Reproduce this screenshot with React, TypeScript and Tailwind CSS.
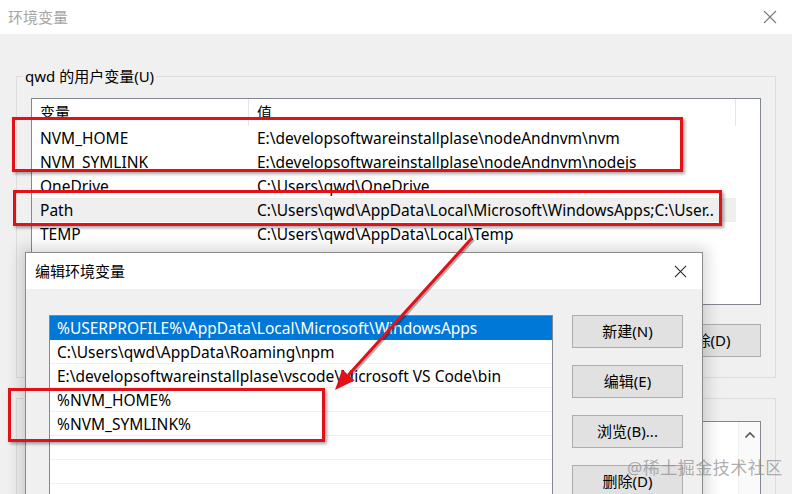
import React from "react";

const userVars = [
  ["NVM_HOME", "E:\\developsoftwareinstallplase\\nodeAndnvm\\nvm"],
  ["NVM_SYMLINK", "E:\\developsoftwareinstallplase\\nodeAndnvm\\nodejs"],
  ["OneDrive", "C:\\Users\\qwd\\OneDrive"],
  ["Path", "C:\\Users\\qwd\\AppData\\Local\\Microsoft\\WindowsApps;C:\\User.."],
  ["TEMP", "C:\\Users\\qwd\\AppData\\Local\\Temp"],
];

const pathItems = [
  "%USERPROFILE%\\AppData\\Local\\Microsoft\\WindowsApps",
  "C:\\Users\\qwd\\AppData\\Roaming\\npm",
  "E:\\developsoftwareinstallplase\\vscode\\Microsoft VS Code\\bin",
  "%NVM_HOME%",
  "%NVM_SYMLINK%",
  "",
  "",
  "",
];

function CloseIcon({ size, color }: { size: number; color: string }) {
  return (
    <svg width={size} height={size} viewBox="0 0 14 14">
      <path d="M1 1L13 13M13 1L1 13" stroke={color} strokeWidth="1.1" fill="none" />
    </svg>
  );
}

function WinButton({ label, className = "" }: { label: string; className?: string }) {
  return (
    <div
      className={`w-[111px] h-[33px] shrink-0 flex items-center justify-center bg-[#e1e1e1] border border-[#adadad] text-[15px] text-black ${className}`}
    >
      {label}
    </div>
  );
}

export default function App() {
  return (
    <div className="relative w-[792px] h-[494px] overflow-hidden bg-[#f0f0f0] font-['Noto_Sans','Noto_Sans_CJK_SC',sans-serif] text-black">
      {/* background window: 环境变量 */}
      <div className="h-[34px] bg-white flex items-center justify-between pl-[8px] pr-[15px]">
        <span className="text-[15px] text-[#a6a6a6]">环境变量</span>
        <CloseIcon size={14} color="#7a7a7a" />
      </div>

      <div className="px-[16px] pt-[32px]">
        <fieldset className="border border-[#dcdcdc] p-0 m-0">
          <legend className="ml-[6px] px-[2px] text-[15px] leading-[20px]">qwd 的用户变量(U)</legend>
          <div className="px-[14px] pt-[12px] pb-[20px]">
            <div className="h-[207px] border border-[#828790] bg-white">
              <div className="h-[27px] flex text-[15px]">
                <div className="w-[217px] pl-[8px] flex items-center border-r border-[#e5e5e5]">变量</div>
                <div className="w-[487px] pl-[8px] flex items-center border-r border-[#e5e5e5]">值</div>
              </div>
              {userVars.map(([name, value]) => (
                <div
                  key={name}
                  className={`h-[24px] w-[704px] flex items-center pt-[2px] text-[15.5px] ${name === "Path" ? "bg-[#efefef]" : ""}`}
                >
                  <div className="w-[217px] pl-[8px] whitespace-nowrap overflow-hidden">{name}</div>
                  <div className="w-[487px] pl-[8px] whitespace-nowrap overflow-hidden">{value}</div>
                </div>
              ))}
            </div>
            <div className="mt-[19px] flex justify-end gap-[10px]">
              <WinButton label="新建(N)..." />
              <WinButton label="编辑(E)..." />
              <WinButton label="删除(D)" />
            </div>
          </div>
        </fieldset>

        <fieldset className="mt-[10px] border border-[#dcdcdc] p-0 m-0">
          <legend className="ml-[6px] px-[2px] text-[15px] leading-[20px]">系统变量(S)</legend>
          <div className="px-[14px] pt-[13px]">
            <div className="h-[120px] border border-[#828790] bg-white flex justify-end">
              <div className="w-[22px] border-l border-[#f0f0f0] bg-[#fafafa] flex flex-col items-center justify-between">
                <svg width="12" height="8" viewBox="0 0 12 8" className="mt-[9px]">
                  <path d="M1.5 6.5L6 2L10.5 6.5" stroke="#555" strokeWidth="1.6" fill="none" />
                </svg>
                <div className="w-[19px] h-[40px] bg-[#cdcdcd]" />
              </div>
            </div>
          </div>
        </fieldset>
      </div>

      {/* foreground window: 编辑环境变量 */}
      <div className="absolute left-[25px] top-[252px] w-[678px] h-[260px] border border-[#8a8a8a] bg-[#f0f0f0] shadow-[0_0_14px_4px_rgba(0,0,0,0.16)]">
        <div className="h-[36px] bg-white flex items-center justify-between pl-[9px] pr-[15px]">
          <span className="text-[15px]">编辑环境变量</span>
          <CloseIcon size={13} color="#222" />
        </div>
        <div className="flex gap-[19px] pl-[23px] pt-[26px]">
          <div className="w-[504px] h-[240px] border border-[#828790] bg-white">
            {pathItems.map((item, i) => (
              <div
                key={i}
                className={`h-[24px] flex items-center pl-[7px] pt-[2px] text-[15.5px] whitespace-nowrap border-b ${
                  i === 0 ? "bg-[#0078d7] text-white border-[#0078d7]" : "border-[#f0f0f0]"
                }`}
              >
                {item}
              </div>
            ))}
          </div>
          <div className="flex flex-col gap-[17px]">
            <WinButton label="新建(N)" />
            <WinButton label="编辑(E)" />
            <WinButton label="浏览(B)..." />
            <WinButton label="删除(D)" />
          </div>
        </div>
      </div>

      {/* annotations */}
      <div className="absolute left-[12px] top-[117px] w-[671px] h-[55px] border-[3px] border-[#e3101a] shadow-[2px_2px_3px_rgba(0,0,0,0.35)]" />
      <div className="absolute left-[13px] top-[190px] w-[709px] h-[36px] border-[3px] border-[#e3101a] shadow-[2px_2px_3px_rgba(0,0,0,0.35)]" />
      <div className="absolute left-[8px] top-[388px] w-[317px] h-[54px] border-[3px] border-[#e3101a] shadow-[2px_2px_3px_rgba(0,0,0,0.35)]" />
      <svg className="absolute left-0 top-0 pointer-events-none" width="792" height="494">
        <g opacity="0.3" transform="translate(1.5,1.5)">
          <line x1="472" y1="238" x2="348.4" y2="375.1" stroke="#000" strokeWidth="3" />
        </g>
        <line x1="472" y1="238" x2="348.4" y2="375.1" stroke="#e3101a" strokeWidth="3" />
        <polygon points="335,390 354.6,380.6 342.2,369.6" fill="#e3101a" />
      </svg>

      <div className="absolute left-[627px] top-[455px] text-[17px] text-[#8c8c8c]/70 tracking-[0.5px]">@稀土掘金技术社区</div>
    </div>
  );
}
